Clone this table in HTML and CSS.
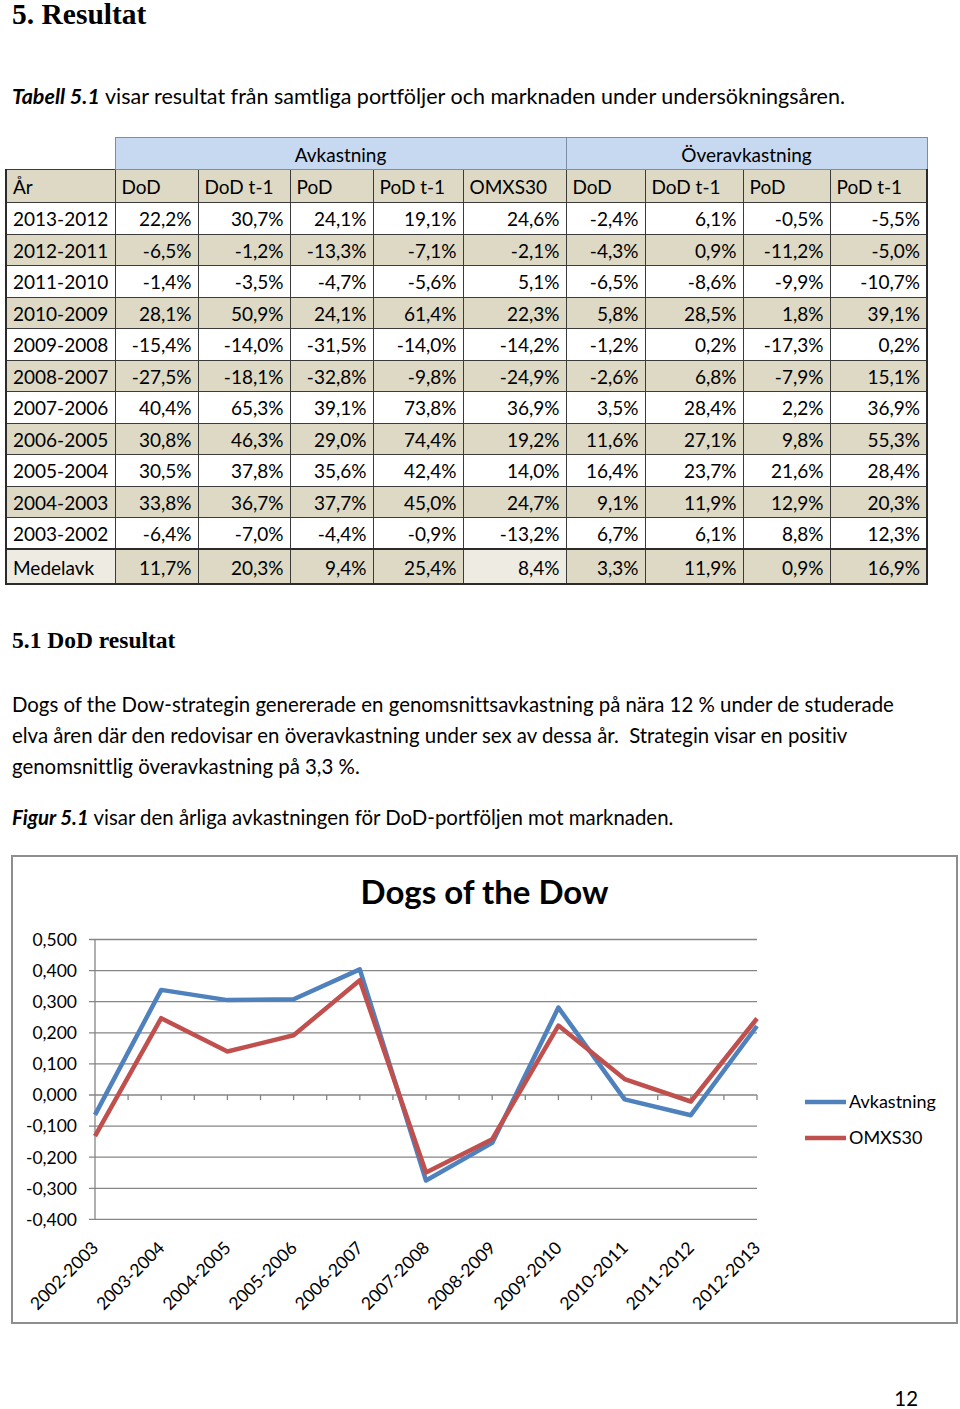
FILE: index.html
```html
<!DOCTYPE html>
<html lang="sv">
<head>
<meta charset="utf-8">
<title>5. Resultat</title>
<link rel="stylesheet" href="styles.css">
</head>
<body>
<div class="page">
  <h1 class="h1">5. Resultat</h1>
  <p class="intro"><b><i>Tabell 5.1</i></b> visar resultat från samtliga portföljer och marknaden under undersökningsåren.</p>

  <table class="results">
    <colgroup>
      <col class="c-year"><col class="c1"><col class="c2"><col class="c3"><col class="c4"><col class="c5"><col class="c6"><col class="c7"><col class="c8"><col class="c9">
    </colgroup>
    <tr class="band">
      <th class="blank"></th>
      <th class="group" colspan="5">Avkastning</th>
      <th class="group" colspan="4">Överavkastning</th>
    </tr>
    <tr class="head">
      <th>År</th><th>DoD</th><th>DoD t-1</th><th>PoD</th><th>PoD t-1</th><th>OMXS30</th><th>DoD</th><th>DoD t-1</th><th>PoD</th><th>PoD t-1</th>
    </tr>
    <tr class="w"><td>2013-2012</td><td>22,2%</td><td>30,7%</td><td>24,1%</td><td>19,1%</td><td>24,6%</td><td>-2,4%</td><td>6,1%</td><td>-0,5%</td><td>-5,5%</td></tr>
    <tr class="b"><td>2012-2011</td><td>-6,5%</td><td>-1,2%</td><td>-13,3%</td><td>-7,1%</td><td>-2,1%</td><td>-4,3%</td><td>0,9%</td><td>-11,2%</td><td>-5,0%</td></tr>
    <tr class="w"><td>2011-2010</td><td>-1,4%</td><td>-3,5%</td><td>-4,7%</td><td>-5,6%</td><td>5,1%</td><td>-6,5%</td><td>-8,6%</td><td>-9,9%</td><td>-10,7%</td></tr>
    <tr class="b"><td>2010-2009</td><td>28,1%</td><td>50,9%</td><td>24,1%</td><td>61,4%</td><td>22,3%</td><td>5,8%</td><td>28,5%</td><td>1,8%</td><td>39,1%</td></tr>
    <tr class="w"><td>2009-2008</td><td>-15,4%</td><td>-14,0%</td><td>-31,5%</td><td>-14,0%</td><td>-14,2%</td><td>-1,2%</td><td>0,2%</td><td>-17,3%</td><td>0,2%</td></tr>
    <tr class="b"><td>2008-2007</td><td>-27,5%</td><td>-18,1%</td><td>-32,8%</td><td>-9,8%</td><td>-24,9%</td><td>-2,6%</td><td>6,8%</td><td>-7,9%</td><td>15,1%</td></tr>
    <tr class="w"><td>2007-2006</td><td>40,4%</td><td>65,3%</td><td>39,1%</td><td>73,8%</td><td>36,9%</td><td>3,5%</td><td>28,4%</td><td>2,2%</td><td>36,9%</td></tr>
    <tr class="b"><td>2006-2005</td><td>30,8%</td><td>46,3%</td><td>29,0%</td><td>74,4%</td><td>19,2%</td><td>11,6%</td><td>27,1%</td><td>9,8%</td><td>55,3%</td></tr>
    <tr class="w"><td>2005-2004</td><td>30,5%</td><td>37,8%</td><td>35,6%</td><td>42,4%</td><td>14,0%</td><td>16,4%</td><td>23,7%</td><td>21,6%</td><td>28,4%</td></tr>
    <tr class="b"><td>2004-2003</td><td>33,8%</td><td>36,7%</td><td>37,7%</td><td>45,0%</td><td>24,7%</td><td>9,1%</td><td>11,9%</td><td>12,9%</td><td>20,3%</td></tr>
    <tr class="w"><td>2003-2002</td><td>-6,4%</td><td>-7,0%</td><td>-4,4%</td><td>-0,9%</td><td>-13,2%</td><td>6,7%</td><td>6,1%</td><td>8,8%</td><td>12,3%</td></tr>
    <tr class="avg"><td class="light">Medelavk</td><td>11,7%</td><td>20,3%</td><td>9,4%</td><td>25,4%</td><td class="light">8,4%</td><td>3,3%</td><td>11,9%</td><td>0,9%</td><td>16,9%</td></tr>
  </table>

  <h2 class="h2">5.1 DoD resultat</h2>
  <p class="body">Dogs of the Dow-strategin genererade en genomsnittsavkastning på nära 12 % under de studerade elva åren där den redovisar en överavkastning under sex av dessa år.&nbsp; Strategin visar en positiv genomsnittlig överavkastning på 3,3 %.</p>
  <p class="fig"><b><i>Figur 5.1</i></b> visar den årliga avkastningen för DoD-portföljen mot marknaden.</p>

  <div class="chart">
    <svg class="chart-svg" width="943" height="465" viewBox="13 856 943 465" xmlns="http://www.w3.org/2000/svg">
      <text class="title" x="484.5" y="903" text-anchor="middle">Dogs of the Dow</text>

      <g class="grid">
        <line x1="89" y1="938.5" x2="757" y2="938.5"/>
        <line x1="89" y1="969.6" x2="757" y2="969.6"/>
        <line x1="89" y1="1000.7" x2="757" y2="1000.7"/>
        <line x1="89" y1="1031.8" x2="757" y2="1031.8"/>
        <line x1="89" y1="1062.9" x2="757" y2="1062.9"/>
        <line x1="89" y1="1094" x2="757" y2="1094"/>
        <line x1="89" y1="1125.1" x2="757" y2="1125.1"/>
        <line x1="89" y1="1156.2" x2="757" y2="1156.2"/>
        <line x1="89" y1="1187.3" x2="757" y2="1187.3"/>
        <line x1="89" y1="1218.4" x2="757" y2="1218.4"/>
        <line x1="95" y1="938.5" x2="95" y2="1218.4"/>
      </g>
      <path class="ticks" d="M128.1 1094v5M161.2 1094v5M194.3 1094v5M227.4 1094v5M260.5 1094v5M293.6 1094v5M326.7 1094v5M359.8 1094v5M392.9 1094v5M426 1094v5M459.1 1094v5M492.2 1094v5M525.3 1094v5M558.4 1094v5M591.5 1094v5M624.6 1094v5M657.7 1094v5M690.8 1094v5M723.9 1094v5M757 1094v5"/>

      <g class="ylab" text-anchor="end">
        <text x="77" y="944.8">0,500</text>
        <text x="77" y="975.9">0,400</text>
        <text x="77" y="1007">0,300</text>
        <text x="77" y="1038.1">0,200</text>
        <text x="77" y="1069.2">0,100</text>
        <text x="77" y="1100.3">0,000</text>
        <text x="77" y="1131.4">-0,100</text>
        <text x="77" y="1162.5">-0,200</text>
        <text x="77" y="1193.6">-0,300</text>
        <text x="77" y="1224.7">-0,400</text>
      </g>

      <polyline class="s-blue" points="95,1113.9 161.2,988.9 227.4,999.1 293.6,998.2 359.8,968.4 426,1179.5 492.2,1141.9 558.4,1006.6 624.6,1098.4 690.8,1114.2 757,1025"/>
      <polyline class="s-red" points="95,1135.1 161.2,1017.2 227.4,1050.5 293.6,1034.3 359.8,979.2 426,1171.4 492.2,1138.2 558.4,1024.6 624.6,1078.1 690.8,1100.5 757,1017.5"/>

      <g class="xlab" text-anchor="end">
        <text x="99.5" y="1248" transform="rotate(-45 99.5 1248)">2002-2003</text>
        <text x="165.7" y="1248" transform="rotate(-45 165.7 1248)">2003-2004</text>
        <text x="231.9" y="1248" transform="rotate(-45 231.9 1248)">2004-2005</text>
        <text x="298.1" y="1248" transform="rotate(-45 298.1 1248)">2005-2006</text>
        <text x="364.3" y="1248" transform="rotate(-45 364.3 1248)">2006-2007</text>
        <text x="430.5" y="1248" transform="rotate(-45 430.5 1248)">2007-2008</text>
        <text x="496.7" y="1248" transform="rotate(-45 496.7 1248)">2008-2009</text>
        <text x="562.9" y="1248" transform="rotate(-45 562.9 1248)">2009-2010</text>
        <text x="629.1" y="1248" transform="rotate(-45 629.1 1248)">2010-2011</text>
        <text x="695.3" y="1248" transform="rotate(-45 695.3 1248)">2011-2012</text>
        <text x="761.5" y="1248" transform="rotate(-45 761.5 1248)">2012-2013</text>
      </g>

      <line class="s-blue" x1="805" y1="1101" x2="846" y2="1101"/>
      <text class="leg" x="849" y="1107.3">Avkastning</text>
      <line class="s-red" x1="805" y1="1137" x2="846" y2="1137"/>
      <text class="leg" x="849" y="1143.3">OMXS30</text>
    </svg>
  </div>

  <div class="pageno">12</div>
</div>
</body>
</html>
```

FILE: styles.css
```css
html, body {
  margin: 0;
  padding: 0;
  background: #ffffff;
}

body {
  color: #000000;
  font-family: Lato, "Open Sans", sans-serif;
  font-variant-ligatures: none;
}

.page {
  width: 948px;
  padding-left: 12px;
}

.h1 {
  margin: 0;
  font-family: "Liberation Serif", "Times New Roman", serif;
  font-weight: bold;
  font-size: 29.5px;
  line-height: 28px;
}

.intro,
.body,
.fig {
  margin: 0;
  font-size: 20.4px;
  line-height: 31px;
}

.intro {
  margin-top: 53px;
  font-size: 21.5px;
}

/* Table */
.results {
  margin-top: 25px;
  margin-left: -7px;
  border-collapse: collapse;
  table-layout: fixed;
  width: 921px;
  font-size: 19px;
}

.c-year { width: 109px; }
.c1 { width: 83px; }
.c2 { width: 92px; }
.c3 { width: 83px; }
.c4 { width: 90px; }
.c5 { width: 103px; }
.c6 { width: 79px; }
.c7 { width: 98px; }
.c8 { width: 87px; }
.c9 { width: 97px; }

.results th,
.results td {
  padding: 0 6px 0 6px;
  font-weight: normal;
  white-space: nowrap;
  line-height: 20px;
  vertical-align: middle;
}

.band {
  height: 32px;
}

.band .blank {
  border: none;
  background: #ffffff;
}

.band .group {
  background: #c6d9f1;
  border: 1px solid #7d8da3;
  text-align: center;
  padding-top: 3px;
}

.head {
  height: 33px;
}

.head th {
  background: #ddd9c4;
  border: 1px solid #3b3b3b;
  text-align: left;
  padding-top: 2px;
}

.w,
.b {
  height: 31.5px;
}

.results td {
  border: 1px solid #3b3b3b;
  text-align: right;
  padding-top: 2px;
}

.results td:first-child {
  text-align: left;
}

.head th:first-child,
.results td:first-child {
  border-left: 2px solid #2b2b2b;
}

.head th:last-child,
.results td:last-child {
  border-right: 2px solid #2b2b2b;
}

.w td {
  background: #ffffff;
}

.b td {
  background: #ddd9c4;
}

.avg {
  height: 35px;
}

.avg td {
  background: #ddd9c4;
  border-top: 2px solid #2b2b2b;
  border-bottom: 2px solid #2b2b2b;
}

.avg td.light {
  background: #eeece2;
}

/* Section */
.h2 {
  margin: 41px 0 0 0;
  font-family: "Liberation Serif", "Times New Roman", serif;
  font-weight: bold;
  font-size: 23.5px;
  line-height: 28px;
}

.body {
  margin-top: 35px;
  max-width: 895px;
}

.fig {
  margin-top: 20px;
}

/* Chart */
.chart {
  margin-top: 22px;
  margin-left: -1px;
  width: 943px;
  height: 465px;
  border: 2px solid #8e8e8e;
}

.chart-svg {
  display: block;
  font-family: Lato, "Open Sans", sans-serif;
}

.title {
  font-size: 33px;
  font-weight: bold;
  fill: #000000;
}

.grid line {
  stroke: #868686;
  stroke-width: 1.3;
}

.ticks {
  stroke: #868686;
  stroke-width: 1.3;
  fill: none;
}

.ylab text,
.xlab text {
  font-size: 17.5px;
  fill: #000000;
}

.leg {
  font-size: 18px;
  fill: #000000;
}

.s-blue {
  fill: none;
  stroke: #4f81bd;
  stroke-width: 4.5;
  stroke-linejoin: round;
}

.s-red {
  fill: none;
  stroke: #c0504d;
  stroke-width: 4.5;
  stroke-linejoin: round;
}

/* Page number */
.pageno {
  margin-top: 59px;
  padding-right: 42px;
  text-align: right;
  font-size: 20.4px;
  line-height: 31px;
}
```
